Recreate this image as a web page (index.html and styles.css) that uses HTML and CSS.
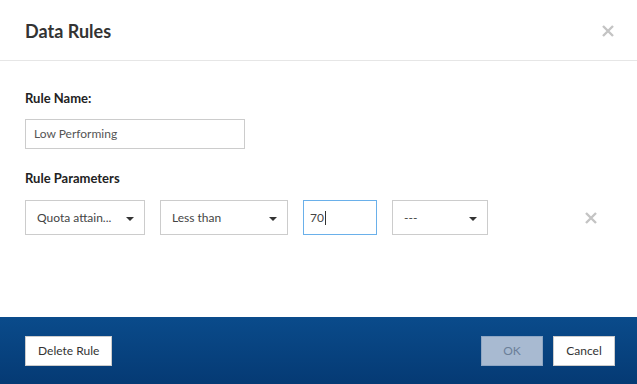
FILE: index.html
```html
<!DOCTYPE html>
<html>
	<head>
		<meta charset="UTF-8">
		<title>Data Rules</title>
		<link rel="stylesheet" href="styles.css">
	</head>
	<body>
		<div class="dialog">
			<div class="head">
				<h1>Data Rules</h1>
				<span class="close">
					<svg width="14" height="14" viewBox="0 0 14 14"><path d="M2 2L12 12M12 2L2 12" stroke="#c4c4c4" stroke-width="2.4"/></svg>
				</span>
			</div>
			<div class="body">
				<label class="lbl">Rule Name:</label>
				<div class="name">Low Performing</div>
				<label class="lbl lbl2">Rule Parameters</label>
				<div class="params">
					<div class="sel sel1">Quota attain...<i class="caret"></i></div>
					<div class="sel sel2">Less than<i class="caret"></i></div>
					<div class="val">70<span class="cursor"></span></div>
					<div class="sel sel3">---<i class="caret"></i></div>
					<span class="remove">
						<svg width="14" height="14" viewBox="0 0 14 14"><path d="M2 2L12 12M12 2L2 12" stroke="#c4c4c4" stroke-width="2.4"/></svg>
					</span>
				</div>
			</div>
			<div class="foot">
				<div class="btn">Delete Rule</div>
				<div class="right">
					<div class="btn ok">OK</div>
					<div class="btn">Cancel</div>
				</div>
			</div>
		</div>
	</body>
</html>
```

FILE: styles.css
```css
*{
	margin: 0;
	padding: 0;
	box-sizing: border-box;
}
body{
	width: 637px;
	height: 384px;
	font-family: Lato, "Liberation Sans", sans-serif;
	color: #333;
	background: #fff;
	overflow: hidden;
}
.dialog{
	height: 384px;
	display: flex;
	flex-direction: column;
}
.head{
	height: 61px;
	border-bottom: 1px solid #e6e6e6;
	display: flex;
	align-items: center;
	justify-content: space-between;
	padding: 0 22px 0 25px;
}
.head h1{
	font-size: 18px;
	font-weight: bold;
	color: #333;
	margin-top: 1px;
}
.close{
	display: flex;
	margin-top: 1px;
}
.body{
	flex: 1;
	padding: 29px 25px 0;
}
.lbl{
	display: block;
	font-size: 13px;
	font-weight: bold;
	color: #222;
	height: 17px;
}
.lbl2{
	margin-top: 21px;
}
.name{
	width: 220px;
	height: 30px;
	border: 1px solid #ccc;
	margin-top: 12px;
	font-size: 12px;
	line-height: 28px;
	padding-left: 8px;
	color: #555;
}
.params{
	display: flex;
	align-items: center;
	margin-top: 13px;
	height: 35px;
}
.sel, .val{
	height: 35px;
	border: 1px solid #ccc;
	font-size: 12px;
	color: #444;
	display: flex;
	align-items: center;
	justify-content: space-between;
	padding: 0 10px 0 11px;
}
.sel1{
	width: 120px;
}
.sel2{
	width: 128px;
	margin-left: 15px;
}
.val{
	width: 74px;
	margin-left: 15px;
	border-color: #6ab0ea;
	justify-content: flex-start;
	padding-left: 6px;
}
.cursor{
	width: 1px;
	height: 14px;
	background: #333;
	margin-left: 1px;
}
.sel3{
	width: 96px;
	margin-left: 15px;
}
.caret{
	width: 0;
	height: 0;
	border-left: 4px solid transparent;
	border-right: 4px solid transparent;
	border-top: 4px solid #333;
	margin-top: 2px;
}
.remove{
	display: flex;
	margin-left: 96px;
}
.foot{
	height: 67px;
	background: linear-gradient(#0a4b8b, #053a74);
	display: flex;
	align-items: center;
	justify-content: space-between;
	padding: 0 22px 0 25px;
}
.right{
	display: flex;
	gap: 10px;
}
.btn{
	height: 30px;
	padding: 0 12px;
	min-width: 62px;
	background: #fff;
	border: 1px solid #ccc;
	font-size: 12px;
	color: #333;
	display: flex;
	align-items: center;
	justify-content: center;
}
.ok{
	background: #a8bad1;
	border-color: #8ea6c3;
	color: #6b7f99;
}
```
